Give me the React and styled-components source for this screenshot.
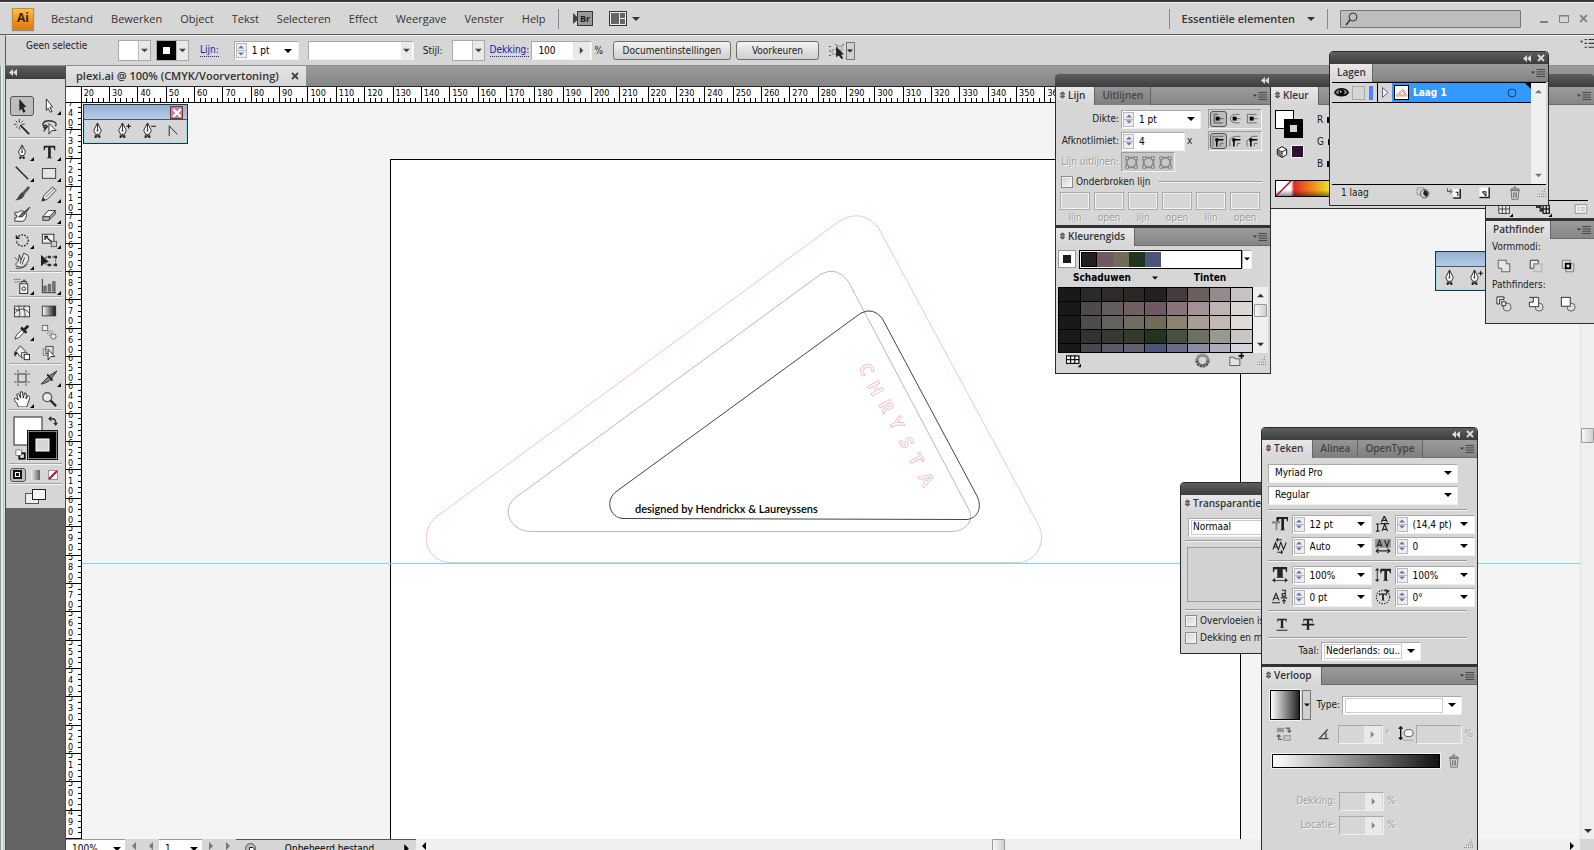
import styled, { createGlobalStyle } from "styled-components";

const GlobalStyle = createGlobalStyle`
	* {
		box-sizing: border-box;
	}

	body {
		margin: 0;
		overflow: hidden;
	}

	button, input, select {
		margin: 0;
		padding: 0;
		border: none;
		border-radius: 0;
		outline: none;
		background: none;
		color: inherit;
		font: inherit;
		appearance: none;
	}

	svg {
		display: block;
		flex: none;
	}
`;

const uiFont = `"DejaVu Sans Condensed", "DejaVu Sans", sans-serif`;
const headFont = `"Open Sans", "Noto Sans", sans-serif`;

/* ---------- page ---------- */

const Wrapper = styled.div`
	position: relative;
	display: flex;
	flex-direction: column;
	height: 100vh;
	overflow: hidden;
	background-color: #d6d6d6;
	border-top: 2px solid #3a3838;
	color: #1c1c1c;
	font-family: ${uiFont};
	font-size: 10px;
	line-height: 12px;
`;

const MenuBar = styled.header`
	display: flex;
	align-items: center;
	height: 33px;
	padding: 0 6px 0 12px;
	border-top: 1px solid #f0f0f0;
	border-bottom: 1px solid #5a5a5a;
	font-family: ${headFont};
	font-size: 11px;
	color: #333;
`;

const Logo = styled.div`
	width: 22px;
	height: 22px;
	margin-right: 17px;
	background: linear-gradient(#fbc04c, #f0961e 55%, #dd7a12);
	border: 1px solid #c98a35;
	box-shadow: 0 1px 1px #888;
	font-size: 12px;
	font-weight: 700;
	line-height: 18px;
	text-align: center;
	color: #3a2408;
`;

const Menu = styled.nav`
	display: flex;
	gap: 18px;
`;

const MenuItem = styled.button`
	line-height: 16px;
`;

const Divider = styled.span`
	width: 1px;
	height: 20px;
	margin: 0 12px;
	background-color: #8a8a8a;
`;

const AppIcon = styled.button`
	display: flex;
	align-items: center;
	gap: 5px;
	margin: 0 14px 0 2px;
`;

const Spacer = styled.span`
	flex: ${({ $grow }) => $grow || 1};
`;

const Workspace = styled.button`
	display: flex;
	align-items: center;
	gap: 12px;
	font-weight: 600;
`;

const Search = styled.label`
	display: flex;
	align-items: center;
	width: 181px;
	height: 18px;
	padding-left: 4px;
	border: 1px solid #767676;
	border-radius: 1px;
	background-color: #bdbdbd;

	input {
		flex: 1;
		min-width: 0;
	}
`;

const WindowButtons = styled.div`
	display: flex;
	align-items: center;
	gap: 10px;
	margin-left: 18px;
	color: #808080;
`;

const ControlBar = styled.div`
	display: flex;
	align-items: center;
	height: 31px;
	padding-left: 4px;
	margin-left: 5px;
	border-left: 1px solid #5a5a5a;
	border-top: 1px solid #f0f0f0;
	border-bottom: 1px solid #8d8d8d;
`;

const Grip = styled.span`
	width: ${({ $wide }) => ($wide ? "52px" : "4px")};
	height: ${({ $wide }) => ($wide ? "4px" : "21px")};
	background-image: radial-gradient(#8f8f8f 40%, transparent 50%);
	background-size: 2px 2px;
`;

const Selection = styled.span`
	align-self: flex-start;
	width: 92px;
	margin: 4px 0 0 12px;
`;

const BarMenu = styled.button`
	align-self: flex-start;
`;

const Chip = styled.button`
	display: flex;
	align-items: center;
	width: 33px;
	height: 21px;
	margin-right: 5px;
	border: 1px solid #a9a9a9;
	background-color: #fff;

	i {
		flex: 1;
		height: 17px;
		margin: 0 1px;
		background-color: ${({ $stroke }) => ($stroke ? "#fff" : "transparent")};
		border: ${({ $stroke }) => ($stroke ? "5px solid #000" : "none")};
		outline: ${({ $stroke }) => ($stroke ? "1px solid #000" : "none")};
	}

	span {
		display: grid;
		place-items: center;
		width: 12px;
		height: 19px;
		border-left: 1px solid #bcbcbc;
		background-color: #e9e9e9;
	}
`;

const DottedLink = styled.a`
	margin-right: ${({ $gap }) => $gap};
	border-bottom: 1px dotted #22a;
	color: #1a1ab4;
	text-decoration: none;
`;

const Btn = styled.button`
	width: ${({ $width }) => $width};
	height: 19px;
	margin-right: 5px;
	border: 1px solid #6d6d6d;
	border-radius: 3px;
	background: linear-gradient(#f4f4f4, #e0e0e0 50%, #cfcfcf);
	text-align: center;
`;

const Body = styled.div`
	display: flex;
	flex: 1;
	min-height: 0;
	padding-left: 5px;
	background: linear-gradient(90deg, #8d9a9c 1px, #e6eaea 1px, #e6eaea 3px, #9aa5a7 3px, #dde1e1 4px);
`;

/* ---------- fields ---------- */

const FieldBox = styled.span`
	display: flex;
	align-items: center;
	width: ${({ $width }) => $width};
	height: 19px;
	padding: 0 1px;
	border: 1px solid #a9a9a9;
	border-right-color: #f0f0f0;
	border-bottom-color: #f0f0f0;
	background-color: ${({ $off }) => ($off ? "#d6d6d6" : "#fff")};
	color: #000;

	input, select {
		flex: 1;
		min-width: 0;
		height: 15px;
		padding-left: 5px;
	}

	select {
		border: ${({ $framed }) => ($framed ? "1px solid #ccc" : "none")};
		padding-left: ${({ $framed }) => ($framed ? "1px" : "5px")};
		margin-left: ${({ $framed }) => ($framed ? "1px" : "0")};
	}
`;

const StepperBox = styled.span`
	display: flex;
	flex-direction: column;
	justify-content: space-evenly;
	align-items: center;
	width: 11px;
	height: 15px;
	border: 1px solid #b9b9b9;
	background: linear-gradient(#eee 6px, #bbb 6px, #bbb 7px, #eee 7px);
`;

const CaretCell = styled.span`
	display: grid;
	place-items: center;
	width: ${({ $wide }) => ($wide ? "17px" : "11px")};
	height: 17px;
	background-color: ${({ $shaded }) => ($shaded ? "#e9e9e9" : "transparent")};
`;

const Caret = ({ size = 7, color = "#000", dir = "down" }) => {
	const points = {
		down: "0,2 8,2 4,6",
		up: "0,6 8,6 4,2",
		right: "2,0 6,4 2,8",
		left: "6,0 2,4 6,8",
	};
	return (
		<svg width={size} height={size} viewBox='0 0 8 8'>
			<polygon points={points[dir]} fill={color} />
		</svg>
	);
};

const Stepper = () => (
	<StepperBox>
		<Caret size={6} color='#6673b4' dir='up' />
		<Caret size={6} color='#6673b4' />
	</StepperBox>
);

const StepField = ({ label, value, width = "80px", caret = true }) => (
	<FieldBox $width={width}>
		<Stepper />
		<input aria-label={label} defaultValue={value} />
		{caret && (
			<CaretCell $wide>
				<Caret size={8} />
			</CaretCell>
		)}
	</FieldBox>
);

const SelectField = ({ label, value = "", width, framed, shaded, id }) => (
	<FieldBox $width={width} $framed={framed}>
		<select aria-label={label} id={id}>
			<option>{value}</option>
		</select>
		<CaretCell $wide={!shaded} $shaded={shaded}>
			<Caret size={shaded ? 7 : 8} color={shaded ? "#444" : "#000"} />
		</CaretCell>
	</FieldBox>
);

/* ---------- icons ---------- */

const nib = (
	<>
		<path d='M9 1 L13 9 L11 13 H7 L5 9 Z' fill='#fff' stroke='#222' />
		<path d='M9 2 V8' stroke='#222' />
		<circle cx='9' cy='9' r='1' fill='#222' />
		<path d='M6 14 H12 V17 H10 V15.500 H8 V17 H6 Z' fill='#222' />
	</>
);

const icons = {
	select: <path d='M6 1 L14 10 L10.500 10.500 L13 15.500 L10.500 16.500 L8.500 12 L6 14.500 Z' fill='#222' />,
	direct: <path d='M6 1 L13 10 L10 10.500 L12.500 15 L10.500 16 L8 11.500 L6 14 Z' fill='#fff' stroke='#222' />,
	wand: (
		<>
			<path d='M7 7 L17 17' stroke='#222' strokeWidth='2' />
			<path d='M6 0 V4 M6 9 V12 M0 6 H3 M8.500 6 H12 M2 2 L4 4 M10 2 L8 4 M2 10 L4 8' stroke='#333' />
		</>
	),
	lasso: (
		<>
			<path d='M4 9 C0 6 3 2 9 2 C15 2 19 5 16 8 M4 9 C8 10 8 8 5 7 C2 8 3 12 6 10 L3 14' fill='none' stroke='#333' strokeWidth='1.500' />
			<path d='M9 5 V17 L12 13 H17 Z' fill='#fff' stroke='#222' />
		</>
	),
	pen: nib,
	penPlus: (
		<>
			{nib}
			<path d='M15.500 2 V7 M13 4.500 H18' stroke='#000' />
		</>
	),
	penMinus: (
		<>
			{nib}
			<path d='M13 4.500 H18' stroke='#000' />
		</>
	),
	convert: <path d='M5.500 15 V4 L14 13' fill='none' stroke='#222' />,
	type: <path d='M3 2 H16 V7 H15 L14 4 H11 V15 L13 16 H6 L8 15 V4 H5 L4 7 H3 Z' fill='#222' />,
	line: <path d='M2 2 L16 16' stroke='#222' strokeWidth='1.500' />,
	rect: <rect x='1.500' y='4' width='15' height='11' fill='#e4e4e4' stroke='#333' />,
	brush: (
		<>
			<path d='M17 1 L10 9' stroke='#555' strokeWidth='3' />
			<path d='M9 7 L12 10 C9 15 6 16 1 16 C5 14 5 10 9 7 Z' fill='#444' />
		</>
	),
	pencil: (
		<>
			<path d='M1 17 L3 11 L13 1 L17 5 L7 15 Z' fill='#e8e8e8' stroke='#333' />
			<path d='M1 17 L2.500 13 L5 16 Z' fill='#222' />
			<path d='M5 13 L15 3' stroke='#777' />
		</>
	),
	blob: (
		<>
			<path d='M1 6 H5 C8 2 15 6 14 10 C13 12 13 15 10 16 H1 V12 H3 V9 H1 Z' fill='#fff' stroke='#222' />
			<path d='M18 0 L11 6 C7 7 8 10 5 11 C9 12 11 10 12 8 Z' fill='#777' stroke='#222' />
		</>
	),
	eraser: (
		<>
			<path d='M2 11 L8 4 H16 L10 11 Z' fill='#f2f2f2' stroke='#333' />
			<path d='M2 11 V15 H9 L16 8 V4 L10 11 H2 M10 11 L9 15' fill='#bbb' stroke='#333' />
		</>
	),
	rotate: (
		<>
			<path d='M5 5 C9 1 16 4 16 9.500 C16 15 9 18 5 14 C3 13 3 11 3 9' fill='none' stroke='#222' strokeWidth='1.500' strokeDasharray='2 1.500' />
			<path d='M2 3 V8 H7 Z' fill='#222' />
		</>
	),
	scale: (
		<>
			<rect x='1.500' y='2.500' width='13' height='10' fill='#eee' stroke='#222' />
			<rect x='11.500' y='10.500' width='6' height='6' fill='#ccc' stroke='#555' />
			<path d='M5 5 L12 11 M4.500 9 V5 H8' fill='none' stroke='#222' strokeWidth='1.500' />
		</>
	),
	warp: (
		<>
			<path d='M1 5 L5 9 L6 2 L8 8 L11 0 L16 3 C18 8 14 13 9 16 L3 15 C1 12 3 10 5 10' fill='#e6e6e6' stroke='#333' />
			<path d='M2 17 C9 18 14 15 15 12 M8 8 L7 12 M12 5 L9 13' fill='none' stroke='#333' />
		</>
	),
	free: (
		<>
			<rect x='5.500' y='4.500' width='11' height='9' fill='none' stroke='#222' strokeDasharray='2 1.500' />
			<path d='M0 2 L9 10 L5 11 L0 15 Z' fill='#222' />
			<path d='M15 3 H18 V6 H15 Z M15 12 H18 V15 H15 Z M8 3 H11 V6 H8 Z M8 12 H11 V15 H8 Z' fill='#222' />
		</>
	),
	spray: (
		<>
			<rect x='6.500' y='6.500' width='9' height='11' fill='#eee' stroke='#222' />
			<circle cx='11' cy='12' r='2' fill='none' stroke='#222' />
			<path d='M8 6 V4 H14 V6 M10 2.500 H13' fill='#ccc' stroke='#222' />
			<path d='M0 1.500 H7 M1 4.500 H6' stroke='#222' strokeDasharray='1 1' />
		</>
	),
	graph: (
		<>
			<path d='M1.500 1 V16.500 H17' fill='none' stroke='#222' />
			<path d='M3 9 H6 V15 H3 Z M8 7 H11 V15 H8 Z M13 4 H16 V15 H13 Z' fill='#777' stroke='#333' strokeWidth='0.500' />
		</>
	),
	mesh: (
		<>
			<rect x='0.500' y='3.500' width='17' height='12' fill='#e8e8e8' stroke='#333' />
			<path d='M0 12 C6 5 12 5 18 12 M6 3 C4 8 9 10 5 16 M12 3 C9 8 14 10 12 16 M0 6 L6 9' fill='none' stroke='#333' />
		</>
	),
	gradient: (
		<>
			<defs>
				<linearGradient id='toolFade'>
					<stop offset='0' stopColor='#fff' />
					<stop offset='1' stopColor='#111' />
				</linearGradient>
			</defs>
			<rect x='1.500' y='3.500' width='15' height='11' fill='url(#toolFade)' stroke='#333' />
		</>
	),
	dropper: (
		<>
			<path d='M1 17 L3 12 L10 6 L12 8 L6 15 Z' fill='#fff' stroke='#333' />
			<path d='M8 4 L14 10 M11 7 L16 2' stroke='#222' strokeWidth='3' />
		</>
	),
	blend: (
		<>
			<rect x='1.500' y='1.500' width='6' height='6' fill='#eee' stroke='#666' />
			<circle cx='14' cy='14' r='3' fill='#eee' stroke='#555' />
			<path d='M8 8 H14 M7 10.500 H12 M9 13 H11' stroke='#555' strokeDasharray='1 1' />
		</>
	),
	bucket: (
		<>
			<path d='M2 7 L7 1 L13 7 L7 13 Z' fill='#eee' stroke='#222' />
			<path d='M1 7 C0 9 0 12 1 13 L4 9 Z' fill='#222' />
			<rect x='8.500' y='8.500' width='6' height='6' fill='#ddd' stroke='#555' />
			<rect x='11.500' y='10.500' width='6' height='6' fill='#fff' stroke='#222' />
		</>
	),
	liveSelect: (
		<>
			<rect x='2.500' y='4.500' width='7' height='7' fill='#ddd' stroke='#777' />
			<rect x='5.500' y='1.500' width='8' height='8' fill='#ddd' stroke='#444' />
			<path d='M8 5 V17 L11 13 H15.500 Z' fill='#fff' stroke='#222' />
		</>
	),
	artboard: (
		<>
			<rect x='4.500' y='4.500' width='9' height='9' fill='none' stroke='#222' />
			<path d='M4.500 0 V3 M13.500 0 V3 M4.500 15 V18 M13.500 15 V18 M0 4.500 H3 M0 13.500 H3 M15 4.500 H18 M15 13.500 H18' stroke='#555' />
		</>
	),
	knife: (
		<>
			<path d='M18 1 L10 6 L0 16 C7 14 11 12 13 8 Z' fill='#888' stroke='#222' />
			<path d='M7 5 L13 12' stroke='#222' strokeWidth='2' />
		</>
	),
	hand: <path d='M5 18 C4 13 0 11 0 9 L2 8 L5 10 L3 4 L5 3 L7.500 8 L7 1 H9.500 L10.500 8 L12 2 L14 3 L13.500 9 L16 5 L18 7 L15 16 L14 18 Z' fill='#fff' stroke='#222' />,
	zoom: (
		<>
			<circle cx='7' cy='7' r='5' fill='#e8eaea' stroke='#555' strokeWidth='1.500' />
			<path d='M10.500 10.500 L17 17' stroke='#222' strokeWidth='2.500' />
		</>
	),
	size: (
		<>
			<path d='M0 6 H9 V8.500 H6 V16 H4 V8.500 H0 Z' fill='#888' />
			<path d='M5 1 H18 V6 H17 L16 3.500 H13.500 V15 L15 16 H9 L10.500 15 V3.500 H8 L7 6 H5 Z' fill='#222' />
		</>
	),
	leading: <path d='M7 7 L10.500 0 L14 7 M8 5 H13 M8 17 L11 9 L14 17 M9 15 H13 M3 9 V17 M1 9 H5 M1 17 H5 M6 8.500 H16' fill='none' stroke='#222' strokeWidth='1.300' />,
	kern: <path d='M1 13 L4 5 L7 13 M2 10 H6 M10 4 L7 14 M10 5 L13 13 L16 5 M5 2 H11 M5 2 L7 0 M5 2 L7 4 M6 16 H12 M12 16 L10 14 M12 16 L10 18' fill='none' stroke='#222' strokeWidth='1.200' />,
	track: (
		<>
			<rect x='0' y='1' width='18' height='10' fill='#999' />
			<path d='M2 10 L5 2.500 L8 10 M3 8 H7 M11 2.500 L13.500 10 L16 2.500 M1 14.500 H17 M1 14.500 L4 12 M1 14.500 L4 17 M17 14.500 L14 12 M17 14.500 L14 17' fill='none' stroke='#222' strokeWidth='1.300' />
		</>
	),
	hScale: <path d='M1 0 H17 V6 H16 L15 2.500 H12 V11 L13.500 12 H4.500 L6 11 V2.500 H3 L2 6 H1 Z M0 15 L3.500 12.500 V14.500 H14.500 V12.500 L18 15 L14.500 17.500 V15.500 H3.500 V17.500 Z' fill='#222' />,
	vScale: <path d='M6 2 H18 V7 H17 L16 4.500 H13.500 V14 L15 15.500 H9 L10.500 14 V4.500 H8 L7 7 H6 Z M2.500 1 L5 4 H3 V14 H5 L2.500 17 L0 14 H2 V4 H0 Z' fill='#222' />,
	baseline: <path d='M1 13 L4.500 5 L8 13 M3 10.500 H7 M0 15.500 H9 M11 1.500 H15 V8 H11.500 V5 H15 M10 10 H17 M13.500 17 V12 M11.500 14 L13.500 12 L15.500 14' fill='none' stroke='#222' strokeWidth='1.200' />,
	charRotate: (
		<>
			<circle cx='9' cy='9' r='7.500' fill='none' stroke='#222' strokeWidth='1.300' strokeDasharray='1.500 1.500' />
			<path d='M4.500 5 H13.500 V8 L12.500 6.500 H10 V12 L11 13 H7 L8 12 V6.500 H5.500 L4.500 8 Z M11 0 L17 2 L13 5 Z' fill='#222' />
		</>
	),
	underline: <path d='M3 1 H15 V6 L13.500 3 H10.500 V12 L12 13 H6 L7.500 12 V3 H4.500 L3 6 Z M2 15 H16 V16.500 H2 Z' fill='#222' />,
	strike: <path d='M3 1 H15 V6 L13.500 3 H10.500 V14 L12 15 H6 L7.500 14 V3 H4.500 L3 6 Z M1 7.500 H17 V9.500 H1 Z' fill='#222' />,
	capButt: (
		<>
			<path d='M9 3 H4 V14 H15 M10 8.500 H16' fill='none' stroke='#333' />
			<rect x='6' y='6' width='5' height='5' fill='#000' />
		</>
	),
	capRound: (
		<>
			<path d='M15 3 H9 C1 4 1 13 9 14 H15 M10 8.500 H16' fill='none' stroke='#555' />
			<rect x='6' y='6' width='5' height='5' fill='#000' />
		</>
	),
	capSquare: (
		<>
			<path d='M15 3 H3 V14 H15 M10 8.500 H16' fill='none' stroke='#555' />
			<rect x='6' y='6' width='5' height='5' fill='#000' />
		</>
	),
	joinMiter: (
		<>
			<path d='M2.500 16 V3 H16 M12 16 V12 H16' fill='none' stroke='#555' />
			<path d='M7.500 16 V7.500 H16' fill='none' stroke='#000' strokeWidth='2' />
			<rect x='5.500' y='5.500' width='4' height='4' fill='#000' />
		</>
	),
	joinRound: (
		<>
			<path d='M2.500 16 V9 C3 4 6 3 16 3 M12 16 V12 H16' fill='none' stroke='#555' />
			<path d='M7.500 16 V7.500 H16' fill='none' stroke='#000' strokeWidth='2' />
			<rect x='5.500' y='5.500' width='4' height='4' fill='#000' />
		</>
	),
	joinBevel: (
		<>
			<path d='M2.500 16 V9 L9 3 H16 M12 16 V12 H16' fill='none' stroke='#555' />
			<path d='M7.500 16 V7.500 H16' fill='none' stroke='#000' strokeWidth='2' />
			<rect x='5.500' y='5.500' width='4' height='4' fill='#000' />
		</>
	),
	align: (
		<>
			<rect x='4' y='4' width='10' height='10' fill='none' stroke='#888' strokeWidth='2' />
			<path d='M3 3 H6 V6 H3 Z M12 3 H15 V6 H12 Z M3 12 H6 V15 H3 Z M12 12 H15 V15 H12 Z' fill='#ddd' stroke='#777' />
		</>
	),
	menu: (
		<>
			<path d='M0 7 H5 L2.500 10 Z' fill='#333' />
			<path d='M7 4.500 H18 M7 7.500 H18 M7 10.500 H18 M7 13.500 H18' stroke='#333' />
		</>
	),
	barMenu: (
		<>
			<path d='M0 6 H4 L2 9 Z' fill='#333' />
			<path d='M6 4.500 H9 M11 4.500 H18 M6 9.500 H9 M11 9.500 H18 M6 14.500 H9 M11 14.500 H18' stroke='#333' strokeWidth='1.500' />
		</>
	),
	trash: (
		<>
			<path d='M4 6 H14 L13 17 H5 Z' fill='#ddd' stroke='#555' />
			<path d='M7 8 V15 M9 8 V15 M11 8 V15 M3 5 C6 2 12 2 15 5 Z M8 3 V1 H10' fill='none' stroke='#555' />
		</>
	),
	newLayer: (
		<>
			<path d='M2 2 H15 V16 H2 Z' fill='#fff' />
			<path d='M15.500 2 V16 H2' fill='none' stroke='#222' strokeWidth='2' />
			<path d='M6 8 H11 V14 M6 8 L11 14' fill='none' stroke='#222' strokeWidth='1.500' />
		</>
	),
	subLayer: (
		<>
			<path d='M0.500 3 V7 H5 M3.500 4 L6.500 7 L3.500 10' fill='none' stroke='#222' />
			<path d='M8 4 H17 V15 H8' fill='#fff' />
			<path d='M17 4 V15.500 H8' fill='none' stroke='#222' strokeWidth='2' />
			<path d='M11 8 H14 V13' fill='none' stroke='#222' strokeWidth='1.500' />
		</>
	),
	mask: (
		<>
			<rect x='1.500' y='2.500' width='9' height='9' fill='none' stroke='#444' strokeDasharray='1 1' />
			<circle cx='11' cy='10' r='5.500' fill='#ccc' stroke='#444' />
			<path d='M11 5 L9 10 L13 14 C17 11 16 6 11 5 Z' fill='#222' />
		</>
	),
	eye: (
		<>
			<path d='M1 9 C4 3 14 3 17 9 C14 14 4 14 1 9 Z' fill='#888' stroke='#111' strokeWidth='2' />
			<circle cx='9' cy='9' r='3.500' fill='#000' />
			<circle cx='8' cy='8' r='1' fill='#fff' />
		</>
	),
	tableGrid: (
		<>
			<rect x='0.500' y='3.500' width='15' height='9' fill='#fff' stroke='#111' strokeWidth='1.500' />
			<path d='M5.500 3 V13 M10.500 3 V13 M0 8 H16' stroke='#111' strokeWidth='1.500' />
			<path d='M14 17 L18 13 V17 Z' fill='#000' />
		</>
	),
	wheel: (
		<>
			<circle cx='9' cy='9' r='6.500' fill='none' stroke='#aaa' strokeWidth='4' />
			<path d='M2.500 9 A6.500 6.500 0 0 0 15.500 9' fill='none' stroke='#555' strokeWidth='4' strokeDasharray='2.500 1' />
			<path d='M2.500 9 A6.500 6.500 0 0 1 15.500 9' fill='none' stroke='#888' strokeWidth='4' strokeDasharray='2.500 1' />
		</>
	),
	folder: (
		<>
			<path d='M1 15 V5 H6 L7 7 H13 V15 Z' fill='#e4e4e4' stroke='#444' />
			<path d='M15 0 V7 M11.500 3.500 H18' stroke='#111' strokeWidth='2' />
		</>
	),
	cube: (
		<>
			<path d='M9 1 L16 5 V13 L9 17 L2 13 V5 Z' fill='#fff' stroke='#111' strokeWidth='1.500' />
			<path d='M2 5 L9 9 L16 5 M9 9 V17' fill='none' stroke='#111' strokeWidth='1.500' />
			<path d='M3 6 L9 9.500 V16 L3 13 Z' fill='#777' />
		</>
	),
	swap: (
		<>
			<path d='M3 5 H8 C12 5 14 8 14 13' fill='none' stroke='#333' strokeWidth='2.500' />
			<path d='M6 0 V10 L0 5 Z M9 12 H18 L14 18 Z' fill='#333' />
		</>
	),
	defaults: (
		<>
			<rect x='7' y='7' width='9' height='9' fill='#ddd' stroke='#111' strokeWidth='3' />
			<rect x='1.500' y='1.500' width='9' height='9' fill='#fff' stroke='#444' />
		</>
	),
	unite: <path d='M2.500 2.500 H11.500 V6.500 H15.500 V15.500 H6.500 V11.500 H2.500 Z' fill='#e6e6e6' stroke='#555' />,
	minusFront: (
		<>
			<path d='M2.500 2.500 H11.500 V6.500 H6.500 V11.500 H2.500 Z' fill='#eee' stroke='#222' />
			<rect x='6.500' y='6.500' width='9' height='9' fill='none' stroke='#aaa' />
		</>
	),
	intersect: (
		<>
			<path d='M2.500 2.500 H11.500 V11.500 H2.500 Z M6.500 6.500 H15.500 V15.500 H6.500 Z' fill='none' stroke='#777' />
			<rect x='6.500' y='6.500' width='5' height='5' fill='#eee' stroke='#000' strokeWidth='2' />
		</>
	),
	divide: (
		<>
			<circle cx='12.500' cy='12.500' r='4.500' fill='#ddd' stroke='#555' />
			<path d='M1 9 V1 H9 V4 H4 V9 Z M6.500 6.500 H11 V11 H6.500 Z' fill='#eee' stroke='#222' />
		</>
	),
	trim: (
		<>
			<circle cx='12.500' cy='12.500' r='4.500' fill='#ddd' stroke='#555' />
			<path d='M1.500 7 H6 V1.500 H12 V12 H1.500 Z M1.500 1.500 H6' fill='#fff' stroke='#222' />
		</>
	),
	merge: (
		<>
			<circle cx='12.500' cy='12.500' r='4.500' fill='#ddd' stroke='#555' />
			<rect x='1.500' y='1.500' width='10' height='10' fill='#fff' stroke='#222' />
		</>
	),
	swatches: (
		<>
			<path d='M2 4 H14 V14 H2 Z' fill='#eee' stroke='#333' />
			<path d='M6 4 V14 M10 4 V14 M2 9 H14' stroke='#333' />
			<path d='M14 18 L18 14 V18 Z' fill='#000' />
		</>
	),
	stack: (
		<>
			<path d='M0 4 H6 V8 H0 Z M4 8 H10 V12 H4 Z' fill='#333' />
			<path d='M8 5 H15 V14 H8 Z M8 9 H15 M11.500 5 V14' fill='#ddd' stroke='#222' strokeWidth='1.500' />
			<path d='M14 18 L18 14 V18 Z' fill='#000' />
		</>
	),
	card: (
		<>
			<rect x='1.500' y='3.500' width='15' height='11' fill='#eee' stroke='#888' />
			<path d='M5 7.500 H7 M5 10.500 H7 M9 7.500 H14 M9 10.500 H14' stroke='#999' />
		</>
	),
	isolate: (
		<>
			<path d='M5 7.500 H9.500 V12.500 H3.500 V7.500 Z M9.500 3.500 H14.500 V8.500 H10 Z' fill='none' stroke='#888' />
			<path d='M0 4 H2 M0 9 H2 M0 14 H2 M7 1 L9 3 M17 1 L15 3' stroke='#333' />
			<path d='M8 4 L17 13 L13.500 13 L16 17 L14 18 L11 14 L8 16 Z' fill='#222' />
		</>
	),
	reverse: (
		<>
			<rect x='1' y='2' width='8' height='5' fill='#999' />
			<rect x='9' y='11' width='7' height='5' fill='#ccc' stroke='#888' />
			<path d='M11 2.500 H15 V7 M13 5 L15 7 L17 5 M7 15 H3 V10 M1 12 L3 10 L5 12' fill='none' stroke='#666' strokeWidth='1.500' />
		</>
	),
	angle: <path d='M14 3 L4 14 H15 M12 7 V14' fill='none' stroke='#444' strokeWidth='1.500' />,
	aspect: (
		<>
			<path d='M3 1 V15 M1 3 L3 1 L5 3 M1 13 L3 15 L5 13' fill='none' stroke='#111' strokeWidth='1.500' />
			<ellipse cx='12' cy='8' rx='5' ry='4' fill='#f4f4f4' stroke='#444' />
			<path d='M6 16 H18' stroke='#777' strokeDasharray='1 1' />
		</>
	),
};

const Icon = ({ name, size = 16 }) => (
	<svg width={size} height={size} viewBox='0 0 18 18'>
		{icons[name]}
	</svg>
);

const CornerGrip = () => (
	<svg width='10' height='10' viewBox='0 0 10 10'>
		<path d='M8 1 H10 M6 3.500 H10 M3 6 H10 M1 8.500 H10' stroke='#888' strokeDasharray='1 1' />
	</svg>
);

/* ---------- tool bar ---------- */

const ToolColumn = styled.aside`
	display: flex;
	flex-direction: column;
	width: 61px;
	border-left: 1px solid #4b4b4b;
	border-right: 1px solid #4b4b4b;
	background-color: #646464;
`;

const DarkBar = styled.div`
	display: flex;
	align-items: center;
	justify-content: ${({ $left }) => ($left ? "flex-start" : "flex-end")};
	gap: 6px;
	height: ${({ $height }) => $height || "12px"};
	padding: 0 ${({ $pad }) => $pad || "3px"};
	border-radius: ${({ $round }) => ($round ? "3px 3px 0 0" : "0")};
	background: linear-gradient(#5e5e5e, #3d3d3d);
	color: #ddd;
`;

const Collapse = () => (
	<svg width='8' height='7' viewBox='0 0 8 7'>
		<path d='M4 0 V7 L0 3.500 Z M8 0 V7 L4 3.500 Z' fill='#ddd' />
	</svg>
);

const Cross = ({ size = 7, color = "#ddd" }) => (
	<svg width={size} height={size} viewBox='0 0 8 8'>
		<path d='M1 1 L7 7 M7 1 L1 7' stroke={color} strokeWidth='1.800' />
	</svg>
);

const ToolBody = styled.div`
	display: flex;
	flex-direction: column;
	align-items: center;
	background-color: #d6d6d6;
`;

const ToolGrip = styled.div`
	height: 14px;
	padding-top: 4px;
`;

const ToolGroup = styled.div`
	display: grid;
	grid-template-columns: ${({ $cols }) => `repeat(${$cols || 2}, 1fr)`};
	grid-auto-rows: ${({ $tight }) => ($tight ? "19px" : "21px")};
	place-items: center;
	width: 53px;
	padding: ${({ $tight }) => ($tight ? "0" : "2px 0 1px")};
	border-bottom: 1px solid #f4f4f4;
	box-shadow: inset 0 -1px #a5a5a5;
`;

const Tool = styled.button`
	position: relative;
	display: grid;
	place-items: center;
	width: ${({ $small }) => ($small ? "16px" : "24px")};
	height: ${({ $small }) => ($small ? "14px" : "20px")};
	border: ${({ $active }) => ($active ? "1px solid #555" : "none")};
	border-radius: 3px;
	background-color: ${({ $active }) => ($active ? "#bdbdbd" : "transparent")};

	&::after {
		content: "";
		position: absolute;
		right: 0;
		bottom: 1px;
		display: ${({ $more }) => ($more ? "block" : "none")};
		border: 2px solid transparent;
		border-right-color: #000;
		border-bottom-color: #000;
	}
`;

const PaintArea = styled.div`
	display: grid;
	place-items: center;
	width: 53px;
	height: 54px;
	border-bottom: 1px solid #f4f4f4;
	box-shadow: inset 0 -1px #a5a5a5;
`;

const ScreenMode = styled.button`
	display: grid;
	place-items: center;
	width: 53px;
	height: 23px;
`;

const toolGroups = [
	[["select", false, true], ["direct", true], ["wand"], ["lasso"]],
	[["pen", true], ["type", true], ["line", true], ["rect", true], ["brush"], ["pencil", true], ["blob"], ["eraser", true]],
	[["rotate", true], ["scale", true], ["warp", true], ["free"]],
	[["spray", true], ["graph", true]],
	[["mesh"], ["gradient"], ["dropper", true], ["blend"], ["bucket"], ["liveSelect"]],
	[["artboard"], ["knife", true], ["hand", true], ["zoom"]],
];

const Toolbar = () => (
	<ToolColumn>
		<DarkBar $left $height='13px'>
			<Collapse />
		</DarkBar>
		<ToolBody>
			<ToolGrip>
				<Grip as='div' $wide />
			</ToolGrip>
			{toolGroups.map((group) => (
				<ToolGroup key={group[0][0]}>
					{group.map(([name, more, active]) => (
						<Tool key={name} aria-label={name} $more={more} $active={active}>
							<Icon name={name} />
						</Tool>
					))}
				</ToolGroup>
			))}
			<PaintArea>
				<svg width='45' height='44' viewBox='0 0 45 44'>
					<rect x='1' y='1' width='28' height='28' fill='#fff' stroke='#222' />
					<rect x='15' y='15' width='29' height='28' fill='#000' stroke='#fff' />
					<rect x='14.500' y='14.500' width='30' height='29' fill='none' stroke='#111' />
					<rect x='23' y='23' width='13' height='12' fill='#d6d6d6' stroke='#fff' />
					<svg x='35' y='0' width='10' height='10' viewBox='0 0 18 18'>{icons.swap}</svg>
					<svg x='2' y='33' width='11' height='11' viewBox='0 0 18 18'>{icons.defaults}</svg>
				</svg>
			</PaintArea>
			<ToolGroup $cols={3} $tight>
				<Tool $small $active aria-label='color'>
					<svg width='9' height='9'>
						<rect width='9' height='9' fill='#111' />
						<rect x='2.500' y='2.500' width='4' height='4' fill='#111' stroke='#fff' />
					</svg>
				</Tool>
				<Tool $small aria-label='gradient fill'>
					<svg width='9' height='10'>
						<rect width='9' height='10' fill='url(#toolFade)' opacity='0.600' />
					</svg>
				</Tool>
				<Tool $small aria-label='none'>
					<svg width='10' height='10'>
						<rect x='0.500' y='0.500' width='9' height='9' fill='#fff' stroke='#999' />
						<path d='M1 9 L9 1' stroke='#b01030' strokeWidth='2' />
					</svg>
				</Tool>
			</ToolGroup>
			<ScreenMode aria-label='screen mode'>
				<svg width='22' height='16'>
					<rect x='0.500' y='4.500' width='13' height='10' fill='#eee' stroke='#555' />
					<rect x='7.500' y='0.500' width='13' height='10' fill='#f4f4f4' stroke='#222' />
				</svg>
			</ScreenMode>
		</ToolBody>
	</ToolColumn>
);

/* ---------- document ---------- */

const DocumentArea = styled.main`
	display: flex;
	flex: 1;
	flex-direction: column;
	min-width: 0;
	background-color: #fff;
`;

const TabBar = styled.div`
	height: 21px;
	border-bottom: 1px solid #222;
	background: linear-gradient(#9b9b9b, #868686);
`;

const DocTab = styled.button`
	display: flex;
	align-items: center;
	justify-content: space-between;
	width: 240px;
	height: 20px;
	padding: 0 7px 0 10px;
	background: linear-gradient(#e4e4e4, #d6d6d6);
	font-family: ${headFont};
	font-size: 11px;
	font-weight: 600;
	color: #333;
	white-space: nowrap;
`;

const RulerRow = styled.div`
	height: 16px;
	overflow: hidden;
	border-bottom: 1px solid #000;
`;

const Middle = styled.div`
	display: flex;
	flex: 1;
	min-height: 0;
`;

const RulerColumn = styled.div`
	width: 16px;
	overflow: hidden;
	border-right: 1px solid #000;
	border-bottom: 1px solid #000;
`;

const Canvas = styled.div`
	position: relative;
	flex: 1;
	overflow: hidden;
	background-color: #f4f4f4;
`;

const Artboard = styled.div`
	position: absolute;
	top: 56px;
	bottom: 0;
	left: 308px;
	width: 851px;
	border: 1px solid #000;
	border-bottom: none;
	background-color: #fff;
`;

const Guide = styled.div`
	position: absolute;
	top: 460px;
	right: 0;
	left: 0;
	height: 1px;
	background-color: #6fe0e4;
`;

const Artwork = styled.svg`
	position: absolute;
	top: 0;
	left: 0;
	overflow: visible;

	path {
		fill: none;
	}
`;

const Caption = styled.text`
	fill: #000;
	font-family: Lato, "Open Sans", sans-serif;
	font-size: 11px;
	font-weight: 600;
`;

const Letter = styled.text`
	fill: none;
	stroke: #f3b4b8;
	stroke-width: 0.7;
	font-family: "Open Sans", sans-serif;
	font-size: 18px;
	font-weight: 700;
	text-anchor: middle;
`;

const ScrollColumn = styled.div`
	display: flex;
	flex-direction: column;
	align-items: center;
	width: 14px;
	padding: 4px 0;
	border-left: 1px solid #e2e2e2;
	background-color: #efefef;
`;

const Thumb = styled.span`
	width: ${({ $size }) => $size || "13px"};
	height: ${({ $size }) => $size || "15px"};
	border: 1px solid #9a9a9a;
	border-radius: 1px;
	background: linear-gradient(90deg, #f8f8f8, #cfcfcf);
`;

const StatusBar = styled.footer`
	display: flex;
	align-items: flex-start;
	height: 11px;
	overflow: hidden;
	background-color: #d6d6d6;
	color: #000;
`;

const StatusField = styled.span`
	display: flex;
	align-items: center;
	width: ${({ $width }) => $width};
	height: 18px;
	padding: 0 4px 0 6px;
	border-top: 1px solid #999;
	background-color: #fff;

	input {
		flex: 1;
		min-width: 0;
	}
`;

const Nav = styled.span`
	display: flex;
	align-items: center;
	justify-content: space-around;
	width: 34px;
	height: 14px;
`;

const FileState = styled.span`
	display: flex;
	align-items: center;
	justify-content: space-between;
	width: 180px;
	height: 18px;
	padding: 0 5px 0 8px;
	border-top: 1px solid #555;
`;

const ScrollRow = styled.div`
	display: flex;
	flex: 1;
	align-items: center;
	justify-content: space-between;
	height: 14px;
	margin-right: 14px;
	padding: 0 4px;
	background-color: #efefef;
`;

const STEP = 28.346;

const letters = [
	["C", 867, 369],
	["H", 876, 388],
	["R", 887, 406],
	["Y", 897, 423],
	["S", 907, 442],
	["T", 917, 459],
	["A", 927, 479],
];

const HorizontalRuler = () => (
	<RulerRow>
		<svg width='1530' height='16' fontSize='9'>
			<path d='M15.500 0 V16' stroke='#000' />
			{Array.from({ length: 35 }, (_, i) => {
				const x = 14.7 + i * STEP;
				return (
					<g key={i}>
						{[1, 2, 3, 4].map((n) => (
							<path key={n} d={`M${Math.round(x + (n * STEP) / 5) + 0.5} 11 V16`} stroke='#000' />
						))}
						<path d={`M${Math.round(x) + 0.5} 0 V16`} stroke='#000' />
						<text x={x + 3} y='9'>{20 + i * 10}</text>
					</g>
				);
			})}
		</svg>
	</RulerRow>
);

const VerticalRuler = () => (
	<RulerColumn>
		<svg width='16' height='740' fontSize='9'>
			{Array.from({ length: 26 }, (_, i) => {
				const y = i * STEP - 2;
				const digits = String(740 - i * 10).split("");
				return (
					<g key={i}>
						{[1, 2, 3, 4].map((n) => (
							<path key={n} d={`M12 ${Math.round(y + (n * STEP) / 5) + 0.5} H16`} stroke='#000' />
						))}
						{digits.map((digit, n) => (
							<text key={n} x='2' y={y + 5 + n * 10}>{digit}</text>
						))}
						<path d={`M0 ${Math.round(y) + 0.5} H16`} stroke='#000' />
					</g>
				);
			})}
		</svg>
	</RulerColumn>
);

const Document = () => (
	<DocumentArea>
		<TabBar>
			<DocTab>
				plexi.ai @ 100% (CMYK/Voorvertoning)
				<Cross size={8} color='#444' />
			</DocTab>
		</TabBar>
		<HorizontalRuler />
		<Middle>
			<VerticalRuler />
			<Canvas>
				<Artboard />
				<Artwork width='1200' height='600'>
					<g transform='translate(-82 -103)'>
						<path d='M436 517 L841 220 Q862 209 878 227 L1038 524 C1047 541 1038 560 1020 562.500 H450 C426 562 418 532 436 517 Z' stroke='#f6c4c8' />
						<path d='M515 498 L821 274 Q837 266 848 281 L968 508 C976 520 965 532 951 531.500 H530 C508 530 502 508 515 498 Z' stroke='#b9b9b9' />
						<path d='M617 491 L861 313 Q873 307 882 318 L977 496 C983 508 977 519 966 519.500 L623 518.500 C610 518 604 500 617 491 Z' stroke='#444' />
						<Caption x='635' y='513'>designed by Hendrickx &amp; Laureyssens</Caption>
						{letters.map(([letter, x, y]) => (
							<Letter key={letter} transform={`translate(${x} ${y}) rotate(62)`} y='7'>{letter}</Letter>
						))}
					</g>
				</Artwork>
				<Guide />
			</Canvas>
			<ScrollColumn>
				<Caret color='#444' dir='up' />
				<Spacer $grow={45} />
				<Thumb />
				<Spacer $grow={55} />
				<Caret color='#333' size={8} />
			</ScrollColumn>
		</Middle>
		<StatusBar>
			<StatusField $width='59px'>
				<input aria-label='Zoom' defaultValue='100%' />
				<Caret size={8} />
			</StatusField>
			<Nav>
				<Caret color='#777' dir='left' size={8} />
				<Caret color='#777' dir='left' size={8} />
			</Nav>
			<StatusField $width='43px'>
				<input aria-label='Pagina' defaultValue='1' />
				<Caret size={8} />
			</StatusField>
			<Nav>
				<Caret color='#777' dir='right' size={8} />
				<Caret color='#777' dir='right' size={8} />
			</Nav>
			<FileState>
				<svg width='13' height='13'>
					<circle cx='6.500' cy='6.500' r='5' fill='#bbb' stroke='#555' />
					<path d='M5.500 5.500 H9 L11 8 V12.500 H5.500 Z' fill='#fff' stroke='#222' />
				</svg>
				<span>Onbeheerd bestand</span>
				<Caret size={9} dir='right' />
			</FileState>
			<ScrollRow>
				<Caret dir='left' size={8} />
				<Thumb />
				<Caret dir='right' size={8} />
			</ScrollRow>
		</StatusBar>
	</DocumentArea>
);

/* ---------- floating panels ---------- */

const Floating = styled.section`
	position: absolute;
	top: ${({ $top }) => $top};
	right: ${({ $right }) => $right};
	left: ${({ $left }) => $left};
	width: ${({ $width }) => $width};
	height: ${({ $height }) => $height};
	overflow: hidden;
	border: ${({ $bare }) => ($bare ? "none" : "1px solid #2b2b2b")};
	border-radius: 4px 4px 0 0;
	background-color: ${({ $bare }) => ($bare ? "transparent" : "#d6d6d6")};
`;

const Tabs = styled.div`
	display: flex;
	align-items: center;
	height: 18px;
	padding-right: 3px;
	border-bottom: 1px solid #6c6c6c;
	background: linear-gradient(#9b9b9b, #868686);
	font-family: ${headFont};
	font-size: 10px;
	font-weight: 600;
`;

const Tab = styled.button`
	display: flex;
	align-items: center;
	gap: 3px;
	height: 18px;
	padding: ${({ $active, $plain }) => ($plain ? "0 6px 2px 7px" : $active ? "0 9px 2px 4px" : "0 7px 2px")};
	border-right: 1px solid #666;
	background: ${({ $active }) => ($active ? "linear-gradient(#e8e8e8, #d6d6d6)" : "linear-gradient(#959595, #7e7e7e)")};
	color: ${({ $active }) => ($active ? "#333" : "#444")};
`;

const UpDown = () => (
	<svg width='5' height='8' viewBox='0 0 5 8'>
		<path d='M0.500 3 L2.500 0.800 L4.500 3 Z M0.500 5 L2.500 7.200 L4.500 5 Z' fill='none' stroke='#222' />
	</svg>
);

const PanelTabs = ({ names = [], plain }) => (
	<Tabs>
		{names.map((name, i) => (
			<Tab key={name} $active={i === 0} $plain={plain}>
				{i === 0 && !plain && <UpDown />}
				{name}
			</Tab>
		))}
		<Spacer />
		<Icon name='menu' size={14} />
	</Tabs>
);

const Rule = styled.hr`
	flex: ${({ $grow }) => ($grow ? "1" : "none")};
	height: 2px;
	margin: ${({ $margin }) => $margin || "0"};
	border: none;
	border-top: 1px solid #9a9a9a;
	background-color: #f4f4f4;
`;

const Row = styled.div`
	display: flex;
	align-items: center;
	gap: ${({ $gap }) => $gap || "2px"};
	height: ${({ $height }) => $height || "22px"};
	padding: ${({ $pad }) => $pad || "0"};
`;

const Label = styled.label`
	width: ${({ $width }) => $width};
	text-align: right;
	color: ${({ $off }) => ($off ? "#a0a0a0" : "#1c1c1c")};
	text-shadow: ${({ $off }) => ($off ? "1px 1px #f4f4f4" : "none")};
	white-space: nowrap;
`;

const CheckLabel = styled.label`
	display: flex;
	align-items: center;
	gap: 3px;
	white-space: nowrap;

	input {
		width: 12px;
		height: 12px;
		border: 1px solid #8c8c8c;
		outline: 1px solid #f4f4f4;
		outline-offset: -2px;
		background: linear-gradient(135deg, #cfcfcf, #f8f8f8);
	}
`;

const OptionGroup = styled.div`
	display: flex;
	align-items: center;
	width: 54px;
	height: 20px;
	margin-left: ${({ $off }) => ($off ? "0" : "auto")};
	padding: 1px;
	border: 1px solid #9d9d9d;
	border-right-color: #f4f4f4;
	border-bottom-color: #f4f4f4;
	background-color: ${({ $off }) => ($off ? "#c6c6c6" : "#d0d0d0")};
`;

const Option = styled.button`
	display: grid;
	place-items: center;
	flex: 1;
	height: 16px;
	border: 1px solid ${({ $active }) => ($active ? "#555" : "transparent")};
	border-radius: 3px;
	background-color: ${({ $active }) => ($active ? "#bbb" : "transparent")};
`;

const Dock = styled.div`
	display: flex;
	align-items: flex-start;
`;

const DockGroup = styled.div`
	flex: none;
	width: ${({ $width }) => $width};
	border: 1px solid #2b2b2b;
	border-top: none;
	margin-left: ${({ $join }) => ($join ? "-1px" : "0")};
	background-color: #d6d6d6;
`;

const StrokeBody = styled.div`
	height: 123px;
	padding: 3px 8px 0 1px;
	border-bottom: 3px solid #333;
`;

const DashRow = styled.div`
	display: grid;
	grid-template-columns: repeat(6, 30px);
	column-gap: 4px;
	margin-left: 3px;
	color: #a0a0a0;
	text-align: center;
	text-shadow: 1px 1px #f4f4f4;

	input {
		display: block;
		width: 30px;
		height: 18px;
		margin-bottom: 2px;
		border: 1px solid #aaa;
		outline: 1px solid #f4f4f4;
		outline-offset: -2px;
	}
`;

const GuideBody = styled.div`
	height: 127px;
	padding: 3px 2px 0;
`;

const BaseColor = styled.span`
	width: 18px;
	height: 18px;
	border: 5px solid #fff;
	outline: 1px solid #999;
	outline-offset: -1px;
	background-color: #1b1b1b;
`;

const Harmony = styled.div`
	display: flex;
	width: 163px;
	height: 19px;
	padding: 1px;
	border: 1px solid #000;
	background-color: #fff;
`;

const Swatch = styled.span`
	width: 16px;
	height: 15px;
	background-color: ${({ $color }) => $color};
	border: ${({ $picked }) => ($picked ? "1px solid #000" : "none")};
`;

const Heading = styled.div`
	display: grid;
	grid-template-columns: 80px 26px 84px;
	align-items: center;
	justify-items: center;
	height: 18px;
	padding-left: 4px;
	font-weight: 700;
	color: #000;
`;

const Variations = styled.div`
	display: flex;
	height: 66px;
`;

const VariationGrid = styled.div`
	display: grid;
	grid-template-columns: repeat(9, 1fr);
	grid-auto-rows: 13px;
	gap: 1px;
	width: 195px;
	overflow: hidden;
	padding: 1px;
	border-bottom: 1px solid #000;
	background-color: #000;
`;

const Cell = styled.span`
	background-color: ${({ $color }) => $color};
`;

const MiniScroll = styled.div`
	display: flex;
	flex-direction: column;
	align-items: center;
	gap: 5px;
	width: 15px;
	padding: 5px 0;
	background-color: #efefef;

	svg:last-child {
		margin-top: auto;
	}
`;

const Footer = styled.div`
	display: flex;
	align-items: center;
	gap: ${({ $gap }) => $gap};
	height: 15px;
	padding: 0 2px 0 ${({ $inset }) => $inset || "8px"};
`;

const variations = [
	["#1b181b", "#2b2929", "#2f2b2c", "#2d2726", "#231f20", "#453b3c", "#6c605f", "#948c8c", "#c6c3c2"],
	["#1a171a", "#4d4a4b", "#645c5f", "#705f63", "#705862", "#8a7478", "#a39294", "#bfb4b5", "#dcd7d6"],
	["#1b181b", "#4e4c4c", "#636260", "#6f6d62", "#716c57", "#8c8270", "#a89f92", "#c2bab2", "#dedad5"],
	["#1b181b", "#333132", "#363a33", "#333b2e", "#1f3520", "#465240", "#6b7162", "#98998f", "#c8c7c1"],
	["#1b181b", "#4b484d", "#5c5a66", "#625f74", "#4c5478", "#6c6b8a", "#8e8aa3", "#afaabd", "#d6d3de"],
];

const StrokePanel = () => (
	<>
		<PanelTabs names={["Lijn", "Uitlijnen"]} />
		<StrokeBody>
			<Row>
				<Label $width='62px'>Dikte:</Label>
				<StepField label='Dikte' value='1 pt' />
				<OptionGroup>
					<Option $active aria-label='butt cap'><Icon name='capButt' size={14} /></Option>
					<Option aria-label='round cap'><Icon name='capRound' size={14} /></Option>
					<Option aria-label='square cap'><Icon name='capSquare' size={14} /></Option>
				</OptionGroup>
			</Row>
			<Row>
				<Label $width='62px'>Afknotlimiet:</Label>
				<StepField label='Afknotlimiet' value='4' width='64px' caret={false} />
				x
				<OptionGroup>
					<Option $active aria-label='miter join'><Icon name='joinMiter' size={14} /></Option>
					<Option aria-label='round join'><Icon name='joinRound' size={14} /></Option>
					<Option aria-label='bevel join'><Icon name='joinBevel' size={14} /></Option>
				</OptionGroup>
			</Row>
			<Row $height='20px'>
				<Label as='span' $width='62px' $off>Lijn uitlijnen:</Label>
				<OptionGroup $off>
					<Icon name='align' size={17} />
					<Icon name='align' size={17} />
					<Icon name='align' size={17} />
				</OptionGroup>
			</Row>
			<Row $height='20px' $gap='8px' $pad='0 0 0 4px'>
				<CheckLabel>
					<input type='checkbox' />
					Onderbroken lijn
				</CheckLabel>
				<Rule $grow />
			</Row>
			<DashRow>
				{["lijn", "open", "lijn", "open", "lijn", "open"].map((name, i) => (
					<label key={i}>
						<input disabled />
						{name}
					</label>
				))}
			</DashRow>
		</StrokeBody>
	</>
);

const ColorGuidePanel = () => (
	<>
		<PanelTabs names={["Kleurengids"]} />
		<GuideBody>
			<Row $height='20px' $gap='3px'>
				<BaseColor />
				<Row $gap='0'>
					<Harmony>
						<Swatch $color='#231f20' $picked />
						<Swatch $color='#705862' />
						<Swatch $color='#716c57' />
						<Swatch $color='#1f3520' />
						<Swatch $color='#4c5478' />
					</Harmony>
					<FieldBox $width='10px' as='button' aria-label='harmonie'>
						<Caret size={6} />
					</FieldBox>
				</Row>
			</Row>
			<Heading>
				<span>Schaduwen</span>
				<Caret size={6} />
				<span>Tinten</span>
			</Heading>
			<Variations>
				<VariationGrid>
					{variations.flat().map((color, i) => (
						<Cell key={i} $color={color} />
					))}
				</VariationGrid>
				<MiniScroll>
					<Caret color='#333' dir='up' />
					<Thumb $size='13px' />
					<Caret color='#333' />
				</MiniScroll>
			</Variations>
			<Footer $gap='12px'>
				<Icon name='tableGrid' size={15} />
				<Spacer />
				<Row $gap='19px' $height='15px'>
					<Icon name='wheel' size={15} />
					<Icon name='folder' size={15} />
				</Row>
				<CornerGrip />
			</Footer>
		</GuideBody>
	</>
);

const ColorBody = styled.div`
	height: 103px;
	padding: 4px 3px 0 4px;
`;

const ColorTop = styled.div`
	display: flex;
	gap: 12px;
	height: 71px;
`;

const Channels = styled.div`
	flex: 1;
`;

const Slider = styled.input`
	flex: 1;
	min-width: 0;
	height: 6px;
	border: 1px solid #000;
	background: linear-gradient(90deg, #000, #888);

	&::-webkit-slider-thumb {
		appearance: none;
	}
`;

const Spectrum = styled.div`
	display: flex;
	height: 17px;
	border: 1px solid #000;
	background: linear-gradient(transparent 60%, #0007), linear-gradient(90deg, #fff 15px, #e02828 18px, #f08020 34px, #e8e820 54px, #28b040 90px, #2858d0 130px, #c028a0);
`;

const ColorPanel = () => (
	<>
		<PanelTabs names={["Kleur"]} />
		<ColorBody>
			<ColorTop>
				<svg width='30' height='50'>
					<rect x='0.500' y='1.500' width='18' height='18' fill='#fff' stroke='#000' />
					<rect x='12' y='13' width='13' height='13' fill='#d6d6d6' stroke='#000' strokeWidth='6' />
					<svg x='1' y='37' width='12' height='12' viewBox='0 0 18 18'>{icons.cube}</svg>
					<rect x='16.500' y='36.500' width='12' height='12' fill='#2c1030' stroke='#f4f4f4' />
				</svg>
				<Channels>
					{["R", "G", "B"].map((name) => (
						<Row as='label' key={name} $gap='4px'>
							{name}
							<Slider type='range' />
						</Row>
					))}
				</Channels>
			</ColorTop>
			<Spectrum>
				<svg width='15' height='15'>
					<path d='M0 15 L15 0' stroke='#b01030' strokeWidth='1.500' />
				</svg>
			</Spectrum>
		</ColorBody>
	</>
);

const SwatchBody = styled.div`
	height: 116px;
	padding: 95px 6px 0 11px;
	border-bottom: 3px solid #333;
`;

const PathfinderBody = styled.div`
	height: 84px;
	padding: 0 6px;
`;

const SwatchFooter = styled.div`
	display: flex;
	justify-content: space-between;
	align-items: center;
	height: 17px;
	border-top: 1px solid #000;
`;

const PathfinderPanel = () => (
	<>
		<PanelTabs names={["Pathfinder"]} plain />
		<PathfinderBody>
			<Row $height='16px'>Vormmodi:</Row>
			<Row $gap='16px' $pad='0 4px'>
				<Icon name='unite' />
				<Icon name='minusFront' />
				<Icon name='intersect' />
			</Row>
			<Row $height='16px'>Pathfinders:</Row>
			<Row $gap='16px' $pad='0 4px'>
				<Icon name='divide' />
				<Icon name='trim' />
				<Icon name='merge' />
			</Row>
		</PathfinderBody>
	</>
);

const MainDock = () => (
	<Floating $top='72px' $right='0' $width='539px' $bare>
		<DarkBar $round $left $height='13px' $pad='206px'>
			<Collapse />
		</DarkBar>
		<Dock>
			<DockGroup $width='216px'>
				<StrokePanel />
				<ColorGuidePanel />
			</DockGroup>
			<DockGroup $width='216px' $join>
				<ColorPanel />
			</DockGroup>
			<DockGroup $width='110px' $join>
				<PanelTabs />
				<SwatchBody>
					<SwatchFooter>
						<Icon name='swatches' />
						<Icon name='stack' />
						<Icon name='card' size={14} />
					</SwatchFooter>
				</SwatchBody>
				<PathfinderPanel />
			</DockGroup>
		</Dock>
	</Floating>
);

const LayerList = styled.div`
	display: flex;
	height: 103px;
	margin: 0 2px;
	border-top: 1px solid #000;
	border-bottom: 1px solid #000;
`;

const LayerRow = styled.div`
	display: flex;
	flex: 1;
	align-items: center;
	height: 20px;
	padding-left: 2px;
	border-bottom: 1px solid #000;
`;

const LayerBox = styled.span`
	width: 13px;
	height: 14px;
	margin: 0 4px 0 3px;
	border: 1px solid #aaa;
`;

const LayerColor = styled.span`
	width: 4px;
	height: 14px;
	margin-right: 4px;
	background-color: #4f80ff;
`;

const LayerToggle = styled.span`
	display: grid;
	place-items: center;
	width: 15px;
	height: 19px;
	border-left: 1px solid #000;
`;

const LayerName = styled.div`
	position: relative;
	display: flex;
	flex: 1;
	align-items: center;
	gap: 4px;
	height: 19px;
	padding: 0 14px 0 2px;
	background-color: #3399ff;
	color: #fff;
	font-weight: 700;

	&::after {
		content: "";
		position: absolute;
		top: 0;
		right: 0;
		border: 3px solid #000;
		border-left-color: transparent;
		border-bottom-color: transparent;
	}
`;

const LayersPanel = () => (
	<Floating $top='49px' $right='45px' $width='220px' $height='155px'>
		<DarkBar>
			<Collapse />
			<Cross size={8} />
		</DarkBar>
		<PanelTabs names={["Lagen"]} plain />
		<LayerList>
			<LayerRow>
				<Icon name='eye' size={15} />
				<LayerBox />
				<LayerColor />
				<LayerToggle>
					<svg width='7' height='11'>
						<path d='M0.500 0.500 L6 5.500 L0.500 10.500 Z' fill='#eef' stroke='#667' />
					</svg>
				</LayerToggle>
				<LayerName>
					<svg width='15' height='15'>
						<rect x='0.500' y='0.500' width='14' height='14' fill='#fff' stroke='#000' />
						<path d='M2 11 L9 4 L13 11 Z M5 10 L9 6 L11 10 Z' fill='none' stroke='#c99' />
					</svg>
					Laag 1
					<Spacer />
					<svg width='10' height='10'>
						<circle cx='5' cy='5' r='4' fill='none' stroke='#123c70' />
					</svg>
				</LayerName>
			</LayerRow>
			<MiniScroll>
				<Caret color='#777' dir='up' />
				<Caret color='#777' />
			</MiniScroll>
		</LayerList>
		<Footer $gap='14px' $inset='11px'>
			<span>1 laag</span>
			<Spacer />
			<Row $gap='17px' $height='15px'>
				<Icon name='mask' size={14} />
				<Icon name='subLayer' size={14} />
				<Icon name='newLayer' size={13} />
				<Icon name='trash' size={14} />
			</Row>
			<CornerGrip />
		</Footer>
	</Floating>
);

const TransparencyBody = styled.div`
	padding: 4px 3px 0 4px;
`;

const Preview = styled.div`
	height: 55px;
	margin: 5px 0 7px 2px;
	border: 1px solid #9d9d9d;
	background-color: #d2d2d2;
`;

const TransparencyPanel = () => (
	<Floating $top='480px' $right='198px' $width='216px' $height='172px'>
		<DarkBar />
		<PanelTabs names={["Transparantie"]} />
		<TransparencyBody>
			<Row $height='20px' $pad='0 0 0 3px'>
				<SelectField label='Overvloeimodus' value='Normaal' width='110px' framed />
			</Row>
			<Rule $margin='3px 0 0' />
			<Preview />
			<Rule $margin='0 0 1px' />
			<Row $height='17px'>
				<CheckLabel>
					<input type='checkbox' />
					Overvloeien isoleren
				</CheckLabel>
			</Row>
			<Row $height='17px'>
				<CheckLabel>
					<input type='checkbox' />
					Dekking en masker bepalen
				</CheckLabel>
			</Row>
		</TransparencyBody>
	</Floating>
);

const CharacterBody = styled.div`
	height: 209px;
	padding: 4px 2px 0 6px;
	border-bottom: 3px solid #333;
`;

const CharacterGrid = styled.div`
	display: grid;
	grid-template-columns: 18px 81px 18px 81px;
	grid-auto-rows: 22px;
	column-gap: 2px;
	align-items: center;
	justify-items: center;
	padding-left: 3px;
`;

const GradientBody = styled.div`
	padding: 4px 4px 0 8px;
`;

const GradientThumb = styled.span`
	width: 30px;
	height: 30px;
	border: 1px solid #000;
	outline: 1px solid #f4f4f4;
	background: linear-gradient(90deg, #fff, #222);
`;

const ThumbMenu = styled.button`
	display: grid;
	place-items: center;
	width: 9px;
	height: ${({ $short }) => ($short ? "18px" : "30px")};
	border: 1px solid #777;
	background-color: #d0d0d0;
`;

const GradientBar = styled.div`
	width: 168px;
	height: 14px;
	border: 1px solid #000;
	outline: 1px solid #f4f4f4;
	background: linear-gradient(90deg, #fff, #111);
`;

const Unit = styled.span`
	color: #a0a0a0;
	text-shadow: 1px 1px #f4f4f4;
`;

const GripRow = styled.div`
	display: flex;
	justify-content: flex-end;
	padding-top: 2px;
`;

const OffField = ({ label, id }) => (
	<FieldBox $width='45px' $off>
		<input id={id} aria-label={label} disabled />
		<CaretCell $wide $shaded>
			<Caret color='#888' dir='right' />
		</CaretCell>
	</FieldBox>
);

const CharacterPanel = () => (
	<Floating $top='425px' $right='116px' $width='217px' $height='440px'>
		<DarkBar>
			<Collapse />
			<Cross size={8} />
		</DarkBar>
		<PanelTabs names={["Teken", "Alinea", "OpenType"]} />
		<CharacterBody>
			<Row>
				<SelectField label='Lettertype' value='Myriad Pro' width='190px' />
			</Row>
			<Row>
				<SelectField label='Stijl' value='Regular' width='190px' />
			</Row>
			<Rule $margin='3px 8px 2px 0' />
			<CharacterGrid>
				<Icon name='size' />
				<StepField label='Tekengrootte' value='12 pt' />
				<Icon name='leading' />
				<StepField label='Regelafstand' value='(14,4 pt)' />
				<Icon name='kern' />
				<StepField label='Tekenspatiëring' value='Auto' />
				<Icon name='track' />
				<StepField label='Tekstspatiëring' value='0' />
			</CharacterGrid>
			<Rule $margin='3px 8px 2px 0' />
			<CharacterGrid>
				<Icon name='hScale' />
				<StepField label='Horizontaal' value='100%' />
				<Icon name='vScale' />
				<StepField label='Verticaal' value='100%' />
				<Icon name='baseline' />
				<StepField label='Basislijn' value='0 pt' />
				<Icon name='charRotate' />
				<StepField label='Rotatie' value='0°' />
			</CharacterGrid>
			<Rule $margin='2px 8px 2px 0' />
			<Row $gap='12px' $pad='0 7px'>
				<Icon name='underline' size={14} />
				<Icon name='strike' size={14} />
			</Row>
			<Rule $margin='1px 8px 1px 0' />
			<Row $pad='0 0 0 29px'>
				<Label htmlFor='taal' $width='22px'>Taal:</Label>
				<SelectField id='taal' value='Nederlands: ou..' width='100px' framed />
			</Row>
		</CharacterBody>
		<PanelTabs names={["Verloop"]} />
		<GradientBody>
			<Row $height='32px'>
				<GradientThumb />
				<ThumbMenu aria-label='verloop kiezen'><Caret size={6} /></ThumbMenu>
				<Label htmlFor='type' $width='27px'>Type:</Label>
				<SelectField id='type' width='120px' framed />
			</Row>
			<Row $height='26px' $pad='0 0 0 6px'>
				<Icon name='reverse' />
				<Row $pad='0 5px 0 22px'>
					<Icon name='angle' size={15} />
				</Row>
				<OffField label='Hoek' />
				<Unit>°</Unit>
				<Spacer />
				<Icon name='aspect' />
				<FieldBox $width='46px' $off>
					<input aria-label='Verhouding' disabled />
				</FieldBox>
				<Unit>%</Unit>
			</Row>
			<Row $height='28px' $gap='7px' $pad='0 0 0 2px'>
				<GradientBar />
				<Icon name='trash' size={14} />
			</Row>
			<Row $height='38px' $pad='14px 0 0' $gap='3px'>
				<Label htmlFor='dekking' $off $width='66px'>Dekking:</Label>
				<OffField id='dekking' />
				<Unit>%</Unit>
			</Row>
			<Row $height='24px' $gap='3px'>
				<Label htmlFor='locatie' $off $width='66px'>Locatie:</Label>
				<OffField id='locatie' />
				<Unit>%</Unit>
			</Row>
			<GripRow>
				<CornerGrip />
			</GripRow>
		</GradientBody>
	</Floating>
);

const Palette = styled.section`
	position: absolute;
	top: ${({ $top }) => $top};
	right: ${({ $right }) => $right};
	left: ${({ $left }) => $left};
	width: 105px;
	height: 40px;
	border: 1px solid #234;
	box-shadow: inset 0 0 0 1px #9fdcea;
	background-color: #d6d6d6;
`;

const PaletteBar = styled.div`
	display: flex;
	justify-content: flex-end;
	height: 15px;
	padding: 1px 4px 0;
	border-bottom: 1px solid #456;
	background: linear-gradient(#93b0d2, #b4cbe6);
`;

const PaletteClose = styled.button`
	display: grid;
	place-items: center;
	width: 13px;
	height: 13px;
	border: 1px solid #7a2c38;
	background-color: #b98a94;
`;

const PaletteTools = styled.div`
	display: flex;
	gap: 8px;
	padding: 2px 5px;
`;

const PenPalette = (props) => (
	<Palette {...props}>
		<PaletteBar>
			<PaletteClose aria-label='sluiten'>
				<Cross size={10} color='#fff' />
			</PaletteClose>
		</PaletteBar>
		<PaletteTools>
			{["pen", "penPlus", "penMinus", "convert"].map((name) => (
				<Icon key={name} name={name} size={17} />
			))}
		</PaletteTools>
	</Palette>
);

/* ---------- application ---------- */

const menus = ["Bestand", "Bewerken", "Object", "Tekst", "Selecteren", "Effect", "Weergave", "Venster", "Help"];

const App = () => {
	return (
		<Wrapper>
			<GlobalStyle />
			<MenuBar>
				<Logo>Ai</Logo>
				<Menu>
					{menus.map((name) => (
						<MenuItem key={name}>{name}</MenuItem>
					))}
				</Menu>
				<Divider />
				<AppIcon aria-label='Bridge'>
					<svg width='20' height='15' fontSize='9' fontWeight='700'>
						<path d='M0 2 V13 L6 7.500 Z' fill='#444' />
						<rect x='4.500' y='0.500' width='15' height='14' fill='#999' stroke='#333' />
						<text x='7' y='11' fill='#222'>Br</text>
					</svg>
				</AppIcon>
				<AppIcon aria-label='Documenten schikken'>
					<svg width='18' height='15'>
						<rect x='0.500' y='0.500' width='17' height='14' fill='#eee' stroke='#333' />
						<path d='M2 2 H10 V13 H2 Z M11 2 H16 V7 H11 Z M11 8 H16 V13 H11 Z' fill='#666' />
					</svg>
					<Caret color='#333' size={8} />
				</AppIcon>
				<Spacer />
				<Divider />
				<Workspace>
					Essentiële elementen
					<Caret color='#333' size={8} />
				</Workspace>
				<Divider />
				<Search>
					<svg width='13' height='14'>
						<circle cx='8' cy='5' r='4' fill='none' stroke='#333' />
						<path d='M5 8 L1 13' stroke='#333' strokeWidth='1.500' />
					</svg>
					<input type='search' aria-label='Zoeken' />
				</Search>
				<WindowButtons>
					<svg width='10' height='10'><path d='M1 8 H9' stroke='#808080' strokeWidth='2' /></svg>
					<svg width='10' height='10'><path d='M0.500 1.500 H9.500 V8.500 H0.500 Z M0 2 H10' fill='none' stroke='#808080' /></svg>
					<Cross size={9} color='#808080' />
				</WindowButtons>
			</MenuBar>
			<ControlBar>
				<Grip />
				<Selection>Geen selectie</Selection>
				<Chip aria-label='Vulling'><i /><span><Caret color='#444' /></span></Chip>
				<Chip $stroke aria-label='Lijnkleur'><i /><span><Caret color='#444' /></span></Chip>
				<Row $pad='0 0 0 6px'>
					<DottedLink href='#lijn' $gap='13px'>Lijn:</DottedLink>
					<StepField label='Lijndikte' value='1 pt' width='65px' />
				</Row>
				<Row $pad='0 9px'>
					<SelectField label='Penseel' width='106px' shaded />
				</Row>
				<Row $gap='9px'>
					<Label as='span'>Stijl:</Label>
					<Chip aria-label='Stijl'><i /><span><Caret color='#444' /></span></Chip>
				</Row>
				<DottedLink href='#dekking' $gap='2px'>Dekking:</DottedLink>
				<FieldBox $width='61px'>
					<input aria-label='Dekking' defaultValue='100' />
					<CaretCell $wide $shaded>
						<Caret color='#444' dir='right' />
					</CaretCell>
				</FieldBox>
				<Row $pad='0 10px 0 2px'>%</Row>
				<Btn $width='118px'>Documentinstellingen</Btn>
				<Btn $width='83px'>Voorkeuren</Btn>
				<Row $pad='0 0 0 5px' $gap='1px'>
					<Icon name='isolate' />
					<ThumbMenu $short aria-label='Isoleren'><Caret size={6} color='#222' /></ThumbMenu>
				</Row>
				<Spacer />
				<BarMenu aria-label='Menu'>
					<Icon name='barMenu' size={14} />
				</BarMenu>
			</ControlBar>
			<Body>
				<Toolbar />
				<Document />
			</Body>
			<PenPalette $top='102px' $left='83px' />
			<PenPalette $top='249px' $right='54px' />
			<MainDock />
			<LayersPanel />
			<TransparencyPanel />
			<CharacterPanel />
		</Wrapper>
	);
};

export default App;
